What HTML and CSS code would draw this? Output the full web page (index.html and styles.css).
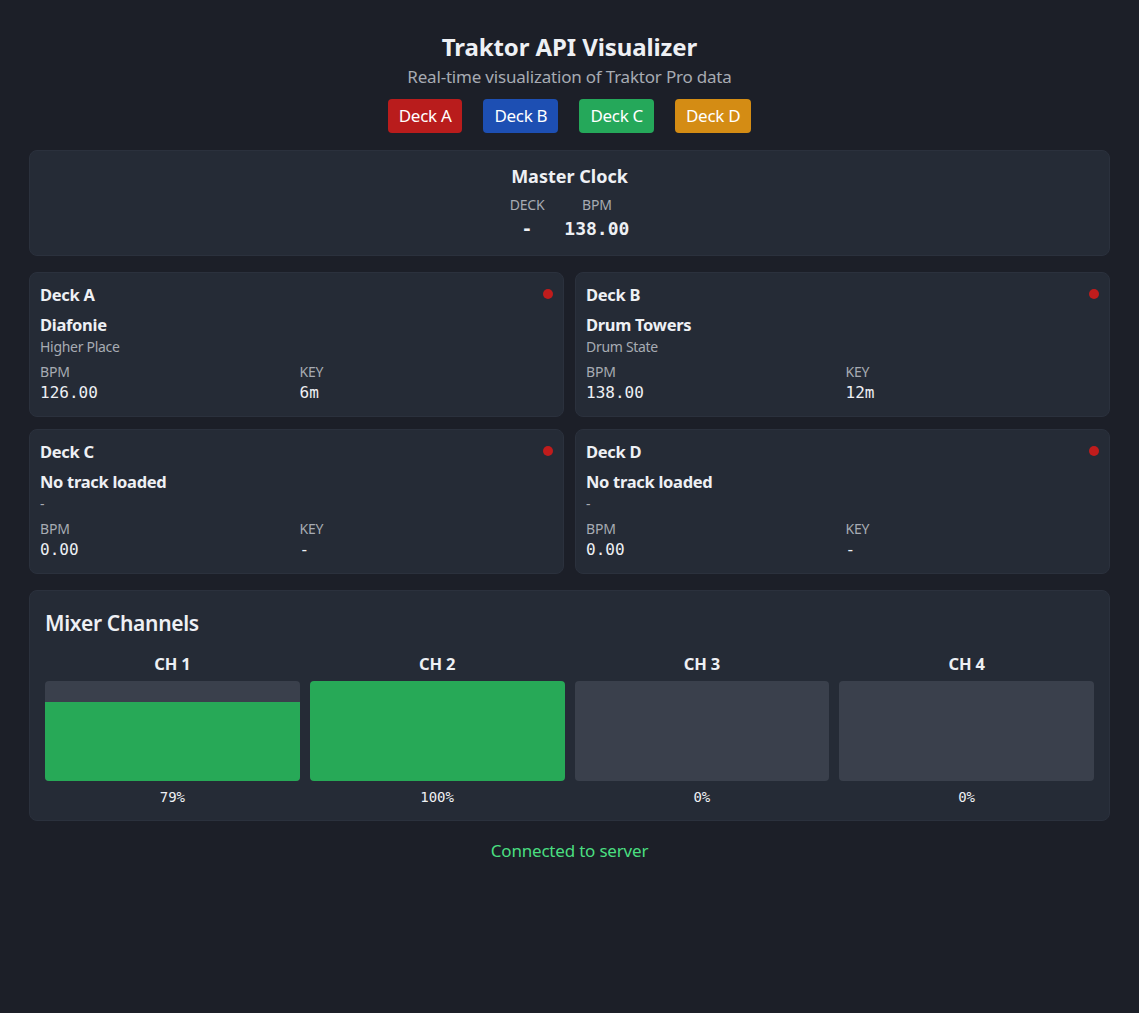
FILE: index.html
```html
<!DOCTYPE html>
<html lang="en">
<head>
<meta charset="utf-8">
<title>Traktor API Visualizer</title>
<link rel="stylesheet" href="styles.css">
</head>
<body>
<div class="container">
  <header class="header">
    <h1 class="title">Traktor API Visualizer</h1>
    <p class="subtitle">Real-time visualization of Traktor Pro data</p>
    <div class="deck-buttons">
      <button class="deck-btn btn-a">Deck A</button>
      <button class="deck-btn btn-b">Deck B</button>
      <button class="deck-btn btn-c">Deck C</button>
      <button class="deck-btn btn-d">Deck D</button>
    </div>
  </header>

  <section class="card master">
    <h2 class="master-title">Master Clock</h2>
    <div class="master-stats">
      <div class="master-stat">
        <div class="label">DECK</div>
        <div class="mono master-value">-</div>
      </div>
      <div class="master-stat">
        <div class="label">BPM</div>
        <div class="mono master-value">138.00</div>
      </div>
    </div>
  </section>

  <section class="deck-grid">
    <div class="card deck">
      <div class="deck-head"><span class="deck-name">Deck A</span><span class="dot"></span></div>
      <div class="track">Diafonie</div>
      <div class="artist">Higher Place</div>
      <div class="deck-stats">
        <div><div class="label">BPM</div><div class="mono value">126.00</div></div>
        <div><div class="label">KEY</div><div class="mono value">6m</div></div>
      </div>
    </div>
    <div class="card deck">
      <div class="deck-head"><span class="deck-name">Deck B</span><span class="dot"></span></div>
      <div class="track">Drum Towers</div>
      <div class="artist">Drum State</div>
      <div class="deck-stats">
        <div><div class="label">BPM</div><div class="mono value">138.00</div></div>
        <div><div class="label">KEY</div><div class="mono value">12m</div></div>
      </div>
    </div>
    <div class="card deck">
      <div class="deck-head"><span class="deck-name">Deck C</span><span class="dot"></span></div>
      <div class="track">No track loaded</div>
      <div class="artist">-</div>
      <div class="deck-stats">
        <div><div class="label">BPM</div><div class="mono value">0.00</div></div>
        <div><div class="label">KEY</div><div class="mono value">-</div></div>
      </div>
    </div>
    <div class="card deck">
      <div class="deck-head"><span class="deck-name">Deck D</span><span class="dot"></span></div>
      <div class="track">No track loaded</div>
      <div class="artist">-</div>
      <div class="deck-stats">
        <div><div class="label">BPM</div><div class="mono value">0.00</div></div>
        <div><div class="label">KEY</div><div class="mono value">-</div></div>
      </div>
    </div>
  </section>

  <section class="card mixer">
    <h2 class="mixer-title">Mixer Channels</h2>
    <div class="channels">
      <div class="channel">
        <div class="ch-name">CH 1</div>
        <div class="meter"><div class="fill" style="height:79%"></div></div>
        <div class="mono pct">79%</div>
      </div>
      <div class="channel">
        <div class="ch-name">CH 2</div>
        <div class="meter"><div class="fill" style="height:100%"></div></div>
        <div class="mono pct">100%</div>
      </div>
      <div class="channel">
        <div class="ch-name">CH 3</div>
        <div class="meter"><div class="fill" style="height:0%"></div></div>
        <div class="mono pct">0%</div>
      </div>
      <div class="channel">
        <div class="ch-name">CH 4</div>
        <div class="meter"><div class="fill" style="height:0%"></div></div>
        <div class="mono pct">0%</div>
      </div>
    </div>
  </section>

  <div class="status">Connected to server</div>
</div>
</body>
</html>
```

FILE: styles.css
```css
* { box-sizing: border-box; }

html, body {
  margin: 0;
  padding: 0;
  background: #1c1f28;
}

body {
  font-family: "Noto Sans", "Open Sans", sans-serif;
  color: #eef0f4;
}

.container {
  width: 1081px;
  margin: 0 auto;
  padding-top: 30px;
}

.header {
  text-align: center;
  margin-bottom: 17px;
}

.title {
  margin: 0;
  font-size: 24px;
  font-weight: 700;
  line-height: 34px;
  letter-spacing: -0.1px;
}

.subtitle {
  margin: 0;
  font-size: 17px;
  line-height: 26px;
  color: #a7abb3;
  letter-spacing: -0.2px;
}

.deck-buttons {
  display: flex;
  justify-content: center;
  gap: 21px;
  margin-top: 9px;
}

.deck-btn {
  font-family: inherit;
  font-size: 17px;
  line-height: 22px;
  color: #ffffff;
  border: none;
  border-radius: 4px;
  padding: 6px 11px;
  letter-spacing: -0.3px;
}
.btn-a { background: #b91c1c; }
.btn-b { background: #1d4fb3; }
.btn-c { background: #25a85a; }
.btn-d { background: #d48c14; }

.card {
  background: #252b36;
  border: 1px solid #2b313d;
  border-radius: 8px;
}

.master {
  text-align: center;
  padding: 12px 10px 10px;
  height: 106px;
}

.master-title {
  margin: 0;
  font-size: 18px;
  line-height: 26px;
  font-weight: 700;
}

.master-stats {
  display: flex;
  justify-content: center;
  gap: 20px;
  margin-top: 6px;
}

.label {
  font-size: 14px;
  line-height: 20px;
  color: #a7abb3;
  letter-spacing: -0.2px;
}

.mono {
  font-family: "DejaVu Sans Mono", "Liberation Mono", monospace;
}

.master-value {
  font-size: 18px;
  font-weight: 700;
  line-height: 28px;
}

.deck-grid {
  display: grid;
  grid-template-columns: 1fr 1fr;
  gap: 12px 11px;
  margin-top: 16px;
}

.deck {
  padding: 9px 10px 12px;
  height: 145px;
}

.deck-head {
  display: flex;
  justify-content: space-between;
  align-items: center;
  margin-top: 1px;
}

.deck-name {
  font-size: 16.5px;
  font-weight: 700;
  line-height: 24px;
  letter-spacing: -0.3px;
}

.dot {
  width: 10px;
  height: 10px;
  border-radius: 50%;
  background: #c01c1c;
  margin-top: -2px;
}

.track {
  margin-top: 6px;
  font-size: 16.5px;
  font-weight: 700;
  line-height: 24px;
  letter-spacing: -0.3px;
}

.artist {
  font-size: 14px;
  line-height: 20px;
  color: #a7abb3;
  letter-spacing: -0.3px;
}

.deck-stats {
  display: grid;
  grid-template-columns: 1fr 1fr;
  gap: 6px;
  margin-top: 5px;
}

.value {
  font-size: 16px;
  line-height: 22px;
}

.mixer {
  margin-top: 16px;
  padding: 18px 15px 12px;
  height: 231px;
}

.mixer-title {
  margin: 0;
  font-size: 21px;
  line-height: 28px;
  font-weight: 600;
  letter-spacing: -0.3px;
}

.channels {
  display: grid;
  grid-template-columns: repeat(4, 1fr);
  gap: 10px;
  margin-top: 16px;
}

.channel {
  text-align: center;
}

.ch-name {
  font-size: 16.5px;
  font-weight: 700;
  line-height: 22px;
  letter-spacing: -0.2px;
}

.meter {
  margin-top: 6px;
  height: 100px;
  background: #3a404c;
  border-radius: 4px;
  overflow: hidden;
  display: flex;
  flex-direction: column;
  justify-content: flex-end;
}

.fill {
  background: #27a957;
  width: 100%;
}

.pct {
  margin-top: 7px;
  font-size: 14px;
  line-height: 18px;
}

.status {
  text-align: center;
  margin-top: 18px;
  font-size: 17px;
  line-height: 24px;
  color: #4ade80;
  letter-spacing: -0.2px;
}
```
